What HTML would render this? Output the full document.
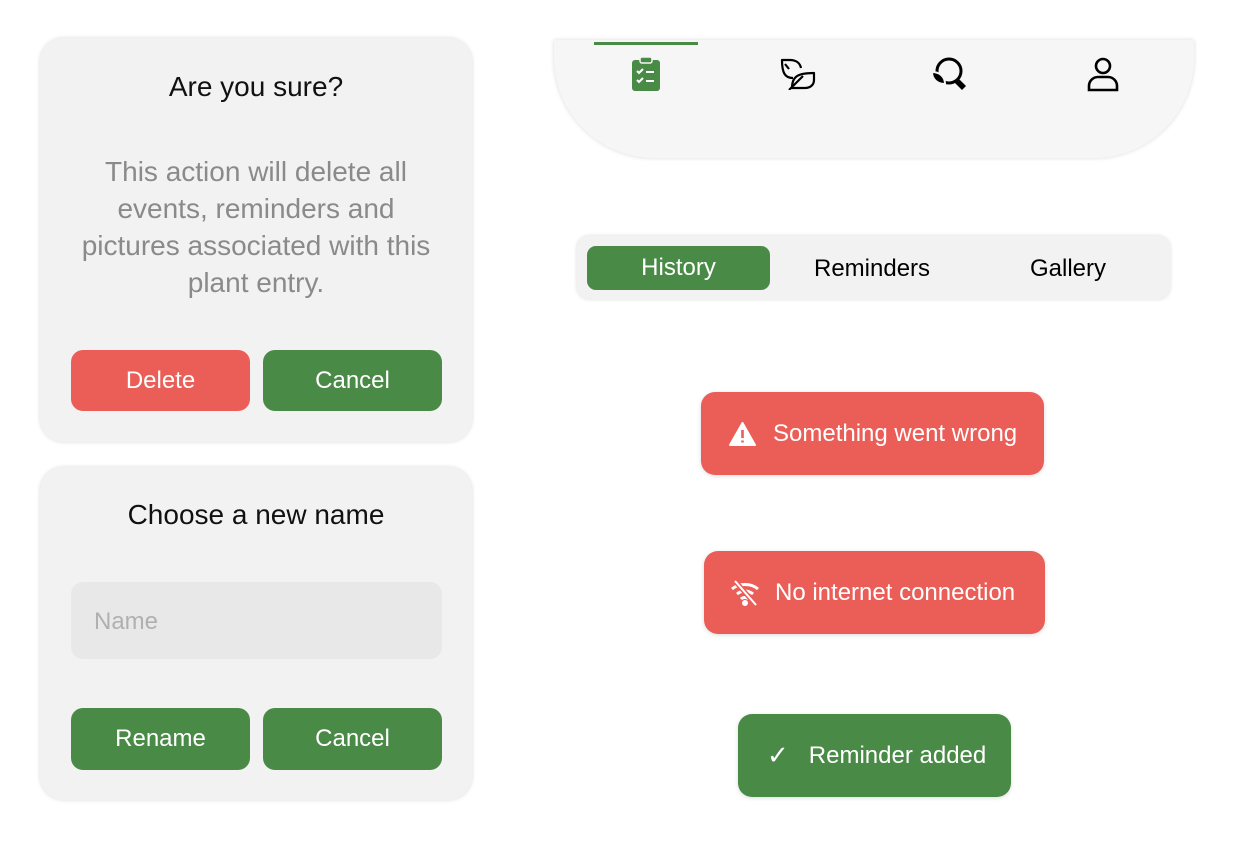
<!DOCTYPE html>
<html><head><style>
*{box-sizing:border-box;margin:0;padding:0}
body{width:1236px;height:845px;background:#fff;font-family:"Liberation Sans",sans-serif;position:relative;overflow:hidden}
.card{position:absolute;background:#f2f2f2;border-radius:24px;box-shadow:0 0 4px rgba(0,0,0,.15)}
.btn{position:absolute;border-radius:12px;color:#fff;font-size:24px;display:flex;align-items:center;justify-content:center}
.g{background:#4a8a47}.r{background:#eb5e58}
.t{position:absolute;left:0;right:0;text-align:center;color:#111;font-size:27px}
.toast{position:absolute;border-radius:14px;color:#fff;font-size:24px;display:flex;align-items:center;box-shadow:0 1px 4px rgba(0,0,0,.15)}
</style></head><body>

<div class="card" style="left:40px;top:38px;width:432px;height:404px">
  <div class="t" style="top:33px;font-size:28px">Are you sure?</div>
  <div class="t" style="top:115px;color:#8a8a8a;font-size:28px;line-height:37px;padding:0 30px">This action will delete all events, reminders and pictures associated with this plant entry.</div>
  <div class="btn r" style="left:31px;top:312px;width:179px;height:61px">Delete</div>
  <div class="btn g" style="left:223px;top:312px;width:179px;height:61px">Cancel</div>
</div>

<div class="card" style="left:40px;top:467px;width:432px;height:333px">
  <div class="t" style="top:32px;font-size:28px">Choose a new name</div>
  <div style="position:absolute;left:31px;top:115px;width:371px;height:77px;background:#e8e8e8;border-radius:12px;color:#b0b0b0;font-size:24px;padding:26px 0 0 23px">Name</div>
  <div class="btn g" style="left:31px;top:241px;width:179px;height:62px">Rename</div>
  <div class="btn g" style="left:223px;top:241px;width:179px;height:62px">Cancel</div>
</div>

<div style="position:absolute;left:554px;top:40px;width:640px;height:118px;background:#f6f6f6;border-radius:0 0 100px 100px;box-shadow:0 0 4px rgba(0,0,0,.15)"></div>
<div style="position:absolute;left:594px;top:42px;width:104px;height:3px;background:#4a8a47"></div>
<svg style="position:absolute;left:630px;top:56px" width="32" height="36" viewBox="0 0 32 36"><rect x="2" y="4" width="28" height="31" rx="3" fill="#4a8a47"/><rect x="10" y="1" width="12" height="6" rx="2" fill="#4a8a47" stroke="#f6f6f6" stroke-width="1.5"/><path d="M7 15l2 2 4-4M7 24l2 2 4-4M16 16h8M16 25h8" stroke="#fff" stroke-width="2" fill="none"/></svg>
<svg style="position:absolute;left:780px;top:58px" width="36" height="32" viewBox="0 0 36 32" fill="none" stroke="#000" stroke-width="2.2" stroke-linejoin="round"><path d="M13 20C5 20 2 15 2 2h8c6 0 10 3 11 8"/><path d="M5 6l4 5"/><path d="M12 30c0-11 5-15 22-15v7c0 5-4 8-9 8z"/><path d="M9 32l14-14"/></svg>
<svg style="position:absolute;left:930px;top:56px" width="40" height="40" viewBox="0 0 40 40"><circle cx="19" cy="15" r="12" fill="none" stroke="#000" stroke-width="3"/><path d="M2 16c7 0 13 4 13 12-7 0-13-4-13-12z" fill="#000" stroke="#f6f6f6" stroke-width="2"/><path d="M24 26l4-4 8 8-4 4z" fill="#000"/></svg>
<svg style="position:absolute;left:1086px;top:56px" width="34" height="36" viewBox="0 0 34 36" fill="none" stroke="#000" stroke-width="2.6"><circle cx="17" cy="10" r="7"/><path d="M3 34v-4c0-5 4-9 9-9h10c5 0 9 4 9 9v4z"/></svg>

<div style="position:absolute;left:577px;top:236px;width:593px;height:63px;background:#f2f2f2;border-radius:12px;box-shadow:0 0 4px rgba(0,0,0,.15)"></div>
<div class="btn g" style="left:587px;top:246px;width:183px;height:44px;border-radius:9px">History</div>
<div style="position:absolute;left:814px;top:255px;font-size:24px">Reminders</div>
<div style="position:absolute;left:1030px;top:255px;font-size:24px">Gallery</div>

<div class="toast r" style="left:701px;top:392px;width:343px;height:83px">
<svg style="margin-left:28px" width="27" height="24" viewBox="0 0 27 24"><path d="M13.5 1L26 23H1z" fill="#fff" stroke="#fff" stroke-linejoin="round" stroke-width="2"/><path d="M13.5 8v8M13.5 18.5v2" stroke="#eb5e58" stroke-width="2.6"/></svg>
<span style="margin-left:17px">Something went wrong</span></div>

<div class="toast r" style="left:704px;top:551px;width:341px;height:83px">
<svg style="margin-left:26px" width="30" height="26" viewBox="0 0 30 26" fill="none" stroke="#fff" stroke-width="3"><path d="M2 9c7-6 19-6 26 0M7 14c5-4 11-4 16 0M11 19c2-2 6-2 8 0"/><circle cx="15" cy="23" r="1.5" fill="#fff"/><path d="M5 1l21 24" stroke="#eb5e58" stroke-width="5"/><path d="M5 1l21 24" stroke-width="2"/></svg>
<span style="margin-left:15px">No internet connection</span></div>

<div class="toast g" style="left:738px;top:714px;width:273px;height:83px">
<span style="margin-left:29px;font-size:26px">✓</span>
<span style="margin-left:20px">Reminder added</span></div>
</body></html>
